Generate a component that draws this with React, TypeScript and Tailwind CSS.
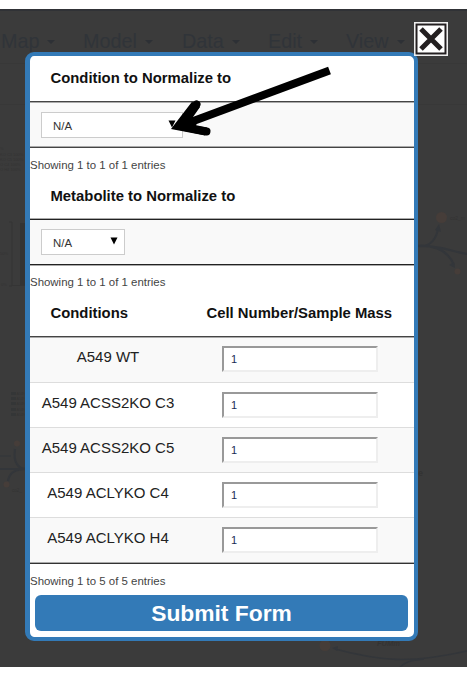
import React from 'react';

const menus = [
  { name: 'Map', cls: 'w-[82px]' },
  { name: 'Model', cls: 'w-[99px]' },
  { name: 'Data', cls: 'w-[86px]' },
  { name: 'Edit', cls: 'w-[78px]' },
  { name: 'View', cls: 'w-[80px]' },
];

const samples = [
  { name: 'A549 WT', cls: 'h-[44px] pt-[8px] bg-[#f9f9f9]' },
  { name: 'A549 ACSS2KO C3', cls: 'h-[45px] pt-[9px] border-t border-[#ddd]' },
  { name: 'A549 ACSS2KO C5', cls: 'h-[45px] pt-[9px] border-t border-[#ddd] bg-[#f9f9f9]' },
  { name: 'A549 ACLYKO C4', cls: 'h-[45px] pt-[9px] border-t border-[#ddd]' },
  { name: 'A549 ACLYKO H4', cls: 'h-[45px] pt-[9px] border-t border-[#ddd] bg-[#f9f9f9]' },
];

function NetworkMap() {
  return (
    <svg className="absolute inset-0" width="467" height="656" viewBox="0 11 467 656" fill="none">
      <path d="M0 63.500H467M0 104.500H467" stroke="#383838" />
      <g stroke="#33363a" strokeWidth="2.200">
        <path d="M418 246C431 248 437 237 438 228M418 246C438 245 449 253 454 265M418 246C438 245 450 251 467 254" />
        <path d="M15 449C13 462 18 469 26 469H0M26 469C14 469 9 474 8 481" />
        <path d="M0 456H11" strokeWidth="1" />
        <path d="M335 649C380 661 410 664 467 651M400 667C407 660 416 660 424 659" strokeWidth="1.600" />
      </g>
      <g fill="#33363a">
        <path d="M439 224l-4 6 6 2zM455 268l-6-3 5-3zM332 648l6-2-1 5z" />
      </g>
      <g fill="#463d39">
        <circle cx="441.500" cy="217.500" r="5.500" />
        <circle cx="457.500" cy="271.500" r="3" />
        <circle cx="17" cy="443.500" r="3" />
        <circle cx="6.500" cy="484.500" r="3" />
        <circle cx="325" cy="645.500" r="5.500" />
      </g>
      <path d="M20 223h5v63h-5z" fill="#343434" />
      <path d="M9 222h3v64H9M12 285.500h13" stroke="#353535" />
      <g fill="#343637">
        <path d="M11 392h5v3h-5zM11 397h5v3h-5zM11 402h5v3h-5zM11 408h5v3h-5zM11 413h5v3h-5z" />
      </g>
      <g fill="#333" fontFamily="Liberation Sans, sans-serif" fontSize="4">
        <text x="450" y="220" fontSize="5">co2_m</text>
        <text x="0" y="150">%</text>
        <text x="0" y="156">KO C3 100%</text>
        <text x="0" y="161">KO C5 100%</text>
        <text x="0" y="166">O C4 100%</text>
        <text x="0" y="171">O H4 100%</text>
        <text x="0" y="255">50%</text>
        <text x="1" y="286">0%</text>
        <text x="16.500" y="395" fontSize="3.400">A549</text>
        <text x="16.500" y="400" fontSize="3.400">A549</text>
        <text x="16.500" y="405" fontSize="3.400">A549</text>
        <text x="16.500" y="411" fontSize="3.400">A549</text>
        <text x="16.500" y="416" fontSize="3.400">A549</text>
        <text x="12" y="492" fontSize="4.500">co2_</text>
        <text x="418" y="476" fontSize="9" fontWeight="bold">e</text>
        <text x="377" y="646" fontSize="7.500" fontWeight="bold" fontStyle="italic">FUMm</text>
      </g>
    </svg>
  );
}

function Heading({ children }: { children: React.ReactNode }) {
  return <div className="pl-[20.5px] text-[14.85px] leading-[18px] font-bold text-[#111]">{children}</div>;
}

function Info({ children }: { children: React.ReactNode }) {
  return <div className="text-[11.45px] leading-[14px] text-[#444]">{children}</div>;
}

function Select({ className }: { className: string }) {
  return (
    <button className={`flex h-[26px] items-center justify-between border border-[#ccc] bg-white pl-[11px] pr-[6px] text-[11.4px] text-[#333] ${className}`}>
      <span className="pt-[3px]">N/A</span>
      <svg width="8" height="8" viewBox="0 0 8 8" className="mb-[3px]"><path d="M.5.500h7L4 7.500z" fill="#000" /></svg>
    </button>
  );
}

export default function App() {
  return (
    <div className="h-[676px] w-[474px] overflow-hidden bg-white pt-[9px] font-['Liberation_Sans',Arial,sans-serif]">
      <div className="relative h-[658px] w-[467px] overflow-hidden border-t-2 border-[#303236] bg-[#3b3b3b]">
        <NetworkMap />
        <nav className="relative flex h-[41px] items-start pt-[18px] pl-[1px] text-[19.8px] leading-[24px] text-[#303439]">
          {menus.map((m) => (
            <div key={m.name} className={`flex shrink-0 items-center gap-[8px] ${m.cls}`}>
              {m.name}
              <svg width="8" height="4" viewBox="0 0 8 4" className="mt-[2px]"><path d="M0 0h8L4 4z" fill="#2d3035" /></svg>
            </div>
          ))}
        </nav>

        <main className="relative ml-[25px] flex h-[589px] w-[393px] flex-col overflow-hidden rounded-[9px] border-4 border-l-5 border-[#337ab7] bg-white">
          <div className="h-[45px] pt-[13px]"><Heading>Condition to Normalize to</Heading></div>
          <div className="h-[47px] border-t border-b border-t-[#444] border-b-[#444]">
            <div className="h-[45px] border-t border-b border-t-[#aaa] border-b-[#aaa] bg-[#f9f9f9] pt-[9px] pl-[11px]">
              <Select className="w-[142px]" />
            </div>
          </div>
          <div className="h-[70px] pt-[10px]">
            <Info>Showing 1 to 1 of 1 entries</Info>
            <div className="pt-[15px]"><Heading>Metabolite to Normalize to</Heading></div>
          </div>
          <div className="h-[48px] border-t border-b border-[#aaa]">
            <div className="h-[46px] border-t border-b border-[#222] bg-[#f9f9f9] pt-[9px] pl-[11px]">
              <Select className="w-[84px]" />
            </div>
          </div>
          <div className="h-[70px] pt-[9px]">
            <Info>Showing 1 to 1 of 1 entries</Info>
            <div className="flex pt-[15px]">
              <div className="w-[156px]"><Heading>Conditions</Heading></div>
              <Heading>Cell Number/Sample Mass</Heading>
            </div>
          </div>
          <div className="h-px shrink-0 bg-[#444]" />
          <div className="h-px shrink-0 bg-[#aaa]" />
          {samples.map((s) => (
            <div key={s.name} className={`flex shrink-0 items-start ${s.cls}`}>
              <div className="w-[156px] pt-px text-center text-[15px] leading-[20px] text-[#222]">{s.name}</div>
              <input
                className="ml-[36px] h-[26px] w-[156px] border-2 border-t-[#999] border-r-[#eee] border-b-[#eee] border-l-[#999] bg-white pl-[7px] text-[11px] text-[#1b2b55] outline-none"
                defaultValue="1"
              />
            </div>
          ))}
          <div className="h-px shrink-0 bg-[#aaa]" />
          <div className="h-px shrink-0 bg-[#333]" />
          <div className="pt-[10px]"><Info>Showing 1 to 5 of 5 entries</Info></div>
          <button className="mt-[7px] ml-[5px] h-[36px] w-[373px] shrink-0 rounded-[6px] bg-[#337ab7] text-[22.8px] leading-[36px] font-bold text-white">Submit Form</button>
        </main>

        <button aria-label="Close" className="absolute top-[11px] left-[414px] h-[34px] w-[34px] border border-[#eee] bg-white">
          <svg width="32" height="32" viewBox="0 0 32 32" fill="none">
            <path d="M1.500 1.500h29v29h-29z" stroke="#231f20" strokeWidth="2" />
            <path d="M6 6l20 20M26 6l-20 20" stroke="#231f20" strokeWidth="5" />
          </svg>
        </button>

        <svg className="absolute top-[49px] left-[160px]" width="180" height="80" viewBox="160 60 180 80" fill="none" stroke="#000">
          <path d="M329.500 70.500L184 124.500" strokeWidth="8" />
          <path d="M196.500 104.500L179.500 126L206.500 131.500" strokeWidth="8" strokeLinecap="round" />
          <path d="M171 129L192 101.800L200 107L193 117L197 122L196 126L207 127.600L205 135.500z" fill="#000" stroke="none" />
        </svg>
      </div>
    </div>
  );
}
